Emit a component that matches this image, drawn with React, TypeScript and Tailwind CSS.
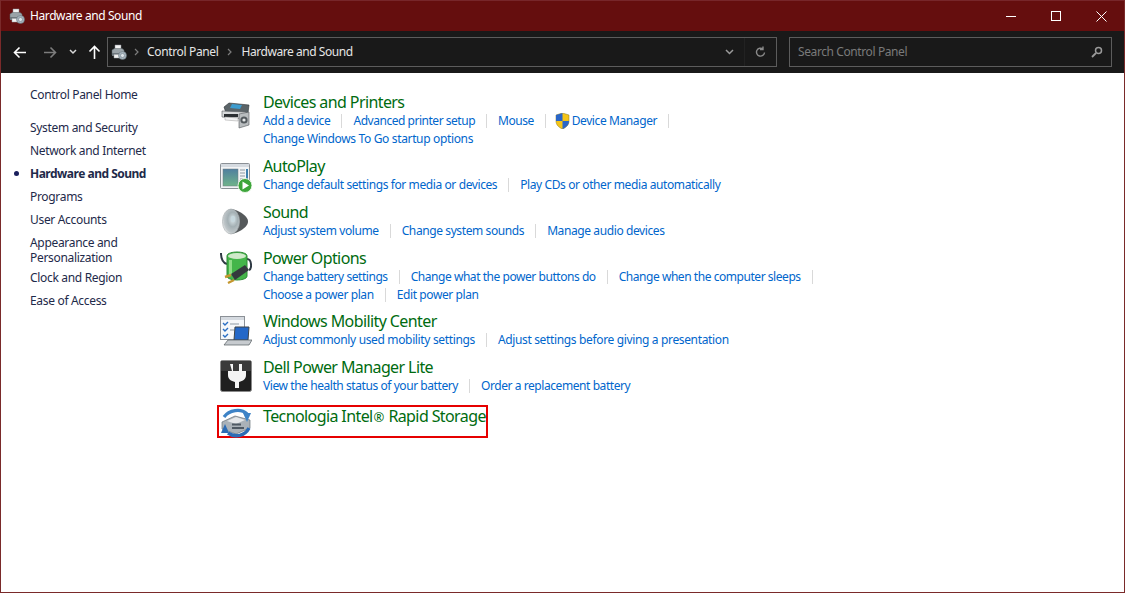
import React from "react";

const PrinterIcon = ({ size = 16 }: { size?: number }) => (
  <svg width={size} height={size} viewBox="0 0 32 32">
    <path d="M8 2h12v9H8z" fill="#f4f4f4" stroke="#8a8f94" />
    <path d="M2 12l5-3h15l4 3v10H2z" fill="#9aa3a8" stroke="#5b6469" />
    <path d="M2 18h24v6H2z" fill="#6d767c" />
    <path d="M6 21h11v7H6z" fill="#f2f2f2" stroke="#9aa0a5" />
    <circle cx="23" cy="23" r="8" fill="#a6b4bd" stroke="#5e6a72" />
    <circle cx="23" cy="23" r="4" fill="#dbe3e8" stroke="#6b7780" />
  </svg>
);

const DevicesIcon = () => (
  <svg width="32" height="32" viewBox="0 0 32 32">
    <path d="M4 9l5-4 20 2-1 8-22 0z" fill="#5b6468" stroke="#2d3235" strokeWidth=".6" />
    <path d="M12 6l10 1-2 4-10-1z" fill="#3d9ccf" />
    <path d="M2 13l24 1v7L2 19z" fill="#d8dadb" stroke="#55595c" strokeWidth=".6" />
    <path d="M4 16h14v3H4z" fill="#2b2f32" />
    <path d="M5 19l13 1v3l-13-1z" fill="#f3f3f3" stroke="#a0a0a0" strokeWidth=".5" />
    <path d="M19 16l10-2v13l-10 3z" fill="#b9bdbf" stroke="#55595c" strokeWidth=".6" />
    <circle cx="24" cy="22" r="3.6" fill="#545a5e" />
    <circle cx="24" cy="22" r="1.6" fill="#e6e8e9" />
  </svg>
);

const AutoPlayIcon = () => (
  <svg width="32" height="32" viewBox="0 0 32 32">
    <rect x=".5" y="2.5" width="29" height="25" rx="1" fill="#f2f4f6" stroke="#8b9096" />
    <rect x="1" y="3" width="28" height="3" fill="#d5dae0" />
    <defs>
      <linearGradient id="ap" x1="0" y1="0" x2="0" y2="1">
        <stop offset="0" stopColor="#4f7f9f" />
        <stop offset="1" stopColor="#6fb38a" />
      </linearGradient>
    </defs>
    <rect x="3" y="8" width="15" height="17" fill="url(#ap)" stroke="#6f7a80" strokeWidth=".5" />
    <path d="M20 9h5M20 12h5M20 15h5M20 18h3" stroke="#8d99a3" />
    <rect x="26" y="8" width="2" height="11" fill="#3d7fae" />
    <circle cx="25" cy="24.5" r="7" fill="#3da53a" stroke="#e8f5e6" />
    <path d="M22.5 20.5l6.5 4-6.5 4z" fill="#fff" />
  </svg>
);

const SoundIcon = () => (
  <svg width="32" height="32" viewBox="0 0 32 32">
    <defs>
      <radialGradient id="sn" cx=".6" cy=".42" r=".65">
        <stop offset="0" stopColor="#dbe6ea" />
        <stop offset=".45" stopColor="#a4b0b4" />
        <stop offset=".8" stopColor="#bfc6c9" />
        <stop offset="1" stopColor="#f4f5f5" />
      </radialGradient>
    </defs>
    <path d="M10 3c6 0 18 6 18 12.500S16 28 10 28z" fill="#55595b" />
    <ellipse cx="11" cy="15.500" rx="8.500" ry="12.500" fill="url(#sn)" stroke="#a7adb0" strokeWidth=".7" />
    <ellipse cx="13" cy="13" rx="2.200" ry="3.200" fill="#c7d8de" />
  </svg>
);

const PowerIcon = () => (
  <svg width="32" height="36" viewBox="0 0 32 36">
    <path d="M1 3c0 6 2 10 6 11M27 9c5 0 5 10 2 11" fill="none" stroke="#2f3a44" strokeWidth="2" />
    <path d="M7 6c0-3 6-4 10-4s10 1 10 4v20c0 3-6 4-10 4s-10-1-10-4z" fill="#44b54a" stroke="#2c8a33" />
    <ellipse cx="17" cy="6" rx="9" ry="3" fill="#cfe9c9" />
    <path d="M9 10h3v15H9z" fill="#8fdc87" />
    <path d="M11 24l14-9 4 5-14 10z" fill="#34393d" />
    <path d="M11 25l-6 2M14 30l-6 3" stroke="#c4972e" strokeWidth="2.4" />
  </svg>
);

const MobilityIcon = () => (
  <svg width="32" height="32" viewBox="0 0 32 32">
    <rect x=".5" y="1.5" width="24" height="23" fill="#f6f8fa" stroke="#8b9096" />
    <rect x="1" y="2" width="23" height="3" fill="#d5dae0" />
    <path d="M3 8l2 2 3-3M3 14l2 2 3-3M3 20l2 2 3-3" fill="none" stroke="#2a6fc4" strokeWidth="1.4" />
    <path d="M10 9h9M10 15h4" stroke="#8d99a3" />
    <path d="M15 12h14l-1 13H14z" fill="#2468c8" stroke="#3c4348" />
    <path d="M8 25h24l-3 5H4z" fill="#c7cbcf" stroke="#555b60" strokeWidth=".7" />
  </svg>
);

const DellIcon = () => (
  <svg width="32" height="32" viewBox="0 0 32 32">
    <rect x=".5" y=".5" width="31" height="31" rx="2" fill="#1f1f1f" stroke="#8a8a8a" />
    <path d="M1 1h30v10H1z" fill="#3a3a3a" />
    <path d="M10 4h3v7h6V4h3v7h4v4c0 4-3 6-7 7v6h-4v-6c-4-1-7-3-7-7v-4h4z" fill="#f4f4f4" />
  </svg>
);

const IntelIcon = () => (
  <svg width="32" height="30" viewBox="0 0 32 30">
    <path d="M2 14l13-6 15 4v8l-14 6-14-5z" fill="#aab2b8" stroke="#68727a" strokeWidth=".7" />
    <path d="M7 13l9-4 9 3-9 4z" fill="#e4e7e9" />
    <path d="M12 19h12v2H12zM12 15.500h9v2h-9z" fill="#4f5a64" />
    <path d="M4 9c5-7 17-9 23-3" fill="none" stroke="#3d83c6" strokeWidth="3.200" />
    <path d="M29 20c-4 8-14 10-21 5" fill="none" stroke="#2c6cb5" strokeWidth="3.400" />
    <path d="M5 16l4 9-8 0z" fill="#2c6cb5" />
    <path d="M27 14l-4-9 8 0z" fill="#3d83c6" />
  </svg>
);

const ShieldIcon = () => (
  <svg width="15" height="16" viewBox="0 0 15 16">
    <path d="M7.5 0L14 2v6c0 4-3 6.500-6.500 8C4 14.500 1 12 1 8V2z" fill="#f5c518" stroke="#8a7a20" strokeWidth=".5" />
    <path d="M7.500 0v8H1V2zM7.500 8H14c0 4-3 6.500-6.500 8z" fill="#2a66c8" />
  </svg>
);

const Sep = () => <span className="mx-[11px] h-[14px] w-px bg-[#d9d9d9]" />;

const Link = ({ children }: { children: React.ReactNode }) => (
  <span className="whitespace-nowrap text-[#0066cc]">{children}</span>
);

const Line = ({ items, end, track = "tracking-[-0.4px]" }: { items: string[]; end?: boolean; track?: string }) => (
  <div className={`flex h-[18px] items-center pt-[2px] text-[12px] ${track}`}>
    {items.map((t, i) => (
      <React.Fragment key={t}>
        <Link>{t}</Link>
        {(i < items.length - 1 || end) && <Sep />}
      </React.Fragment>
    ))}
  </div>
);

const Heading = ({ children }: { children: React.ReactNode }) => (
  <div className="h-[18px] whitespace-nowrap text-[16px] leading-[18px] tracking-[-0.6px] text-[#006b10]">{children}</div>
);

const navItems = ["System and Security", "Network and Internet", "Hardware and Sound", "Programs", "User Accounts"];

export default function App() {
  return (
    <div className="flex h-[593px] w-[1125px] flex-col overflow-hidden border border-t-0 border-[#7a2a2a] bg-white font-['Noto_Sans',sans-serif]">
      {/* title bar */}
      <div className="flex h-[31px] shrink-0 items-center border-t border-[#77262a] bg-[#650e0e] text-white">
        <div className="ml-[8px] mr-[5px]"><PrinterIcon size={16} /></div>
        <span className="text-[12px] tracking-[-0.4px]">Hardware and Sound</span>
        <div className="ml-auto flex items-center">
          <div className="flex h-[30px] w-[45px] items-center justify-center">
            <span className="h-px w-[10px] bg-white" />
          </div>
          <div className="flex h-[30px] w-[45px] items-center justify-center">
            <span className="h-[10px] w-[10px] border border-white" />
          </div>
          <div className="flex h-[30px] w-[46px] items-center justify-center">
            <svg width="11" height="11" viewBox="0 0 11 11"><path d="M.5.5l10 10M10.500.5l-10 10" stroke="#fff" /></svg>
          </div>
        </div>
      </div>

      {/* toolbar */}
      <div className="flex h-[42px] shrink-0 items-center bg-[#191919]">
        <button className="ml-[12px] w-[14px]">
          <svg width="14" height="13" viewBox="0 0 14 13"><path d="M13 6.500H1.500M6.500 1.500l-5 5 5 5" fill="none" stroke="#fff" strokeWidth="1.6" /></svg>
        </button>
        <button className="ml-[16px] w-[14px]">
          <svg width="14" height="13" viewBox="0 0 14 13"><path d="M1 6.500h11.500M7.500 1.500l5 5-5 5" fill="none" stroke="#7c7c7c" strokeWidth="1.6" /></svg>
        </button>
        <button className="ml-[12px] w-[8px]">
          <svg width="8" height="6" viewBox="0 0 8 6"><path d="M1 1l3 3 3-3" fill="none" stroke="#d8d8d8" strokeWidth="1.5" /></svg>
        </button>
        <button className="ml-[11px] w-[13px]">
          <svg width="13" height="14" viewBox="0 0 13 14"><path d="M6.500 14V1.500M1.500 6.500l5-5 5 5" fill="none" stroke="#fff" strokeWidth="1.6" /></svg>
        </button>
        <div className="ml-[6px] flex h-[30px] w-[670px] items-center border border-[#5c5c5c] text-[#e6e6e6]">
          <div className="ml-[3px]"><PrinterIcon size={16} /></div>
          <svg className="ml-[7px]" width="5" height="8" viewBox="0 0 5 8"><path d="M1 1l3 3-3 3" fill="none" stroke="#7c7c7c" strokeWidth="1.2" /></svg>
          <span className="ml-[8px] text-[12px] tracking-[-0.35px]">Control Panel</span>
          <svg className="ml-[8px]" width="5" height="8" viewBox="0 0 5 8"><path d="M1 1l3 3-3 3" fill="none" stroke="#7c7c7c" strokeWidth="1.2" /></svg>
          <span className="ml-[10px] text-[12px] tracking-[-0.45px]">Hardware and Sound</span>
          <svg className="ml-auto" width="9" height="6" viewBox="0 0 9 6"><path d="M1 1l3.500 3.500L8 1" fill="none" stroke="#9a9a9a" strokeWidth="1.5" /></svg>
          <span className="ml-[10px] h-full w-px bg-[#222]" />
          <svg className="mx-[10px]" width="11" height="12" viewBox="0 0 11 12"><path d="M9.500 6.500a4 4 0 1 1-1.500-3.500M8 .5v3H5" fill="none" stroke="#8a8a8a" strokeWidth="1.4" /></svg>
        </div>
        <div className="ml-[12px] flex h-[30px] w-[323px] items-center justify-between border border-[#5c5c5c] pl-[8px] pr-[8px] text-[12px] tracking-[-0.4px] text-[#7a7a7a]">
          <span>Search Control Panel</span>
          <svg width="12" height="12" viewBox="0 0 12 12"><circle cx="7.500" cy="4.500" r="3" fill="none" stroke="#9a9a9a" strokeWidth="1.500" /><path d="M5 7l-4 4" stroke="#9a9a9a" strokeWidth="1.800" /></svg>
        </div>
      </div>

      {/* body */}
      <div className="flex min-h-0 flex-1">
        <nav className="w-[216px] shrink-0 pl-[29px] pt-[14px] text-[12px] tracking-[-0.32px] text-[#1e2a4a]">
          <div className="flex h-[15px] items-center">Control Panel Home</div>
          <ul className="mt-[14px] flex flex-col">
            {navItems.map((n) => (
              <li key={n} className={n === "Hardware and Sound" ? "relative flex h-[23px] items-center font-bold tracking-[-0.5px]" : "flex h-[23px] items-center"}>
                {n === "Hardware and Sound" && <span className="absolute left-[-16px] h-[5px] w-[5px] rounded-full bg-[#1a1f5c]" />}
                {n}
              </li>
            ))}
            <li className="pt-[4px] leading-[15px]">Appearance and<br />Personalization</li>
            <li className="mt-[1px] flex h-[23px] items-center">Clock and Region</li>
            <li className="flex h-[23px] items-center">Ease of Access</li>
          </ul>
        </nav>

        <main className="flex-1 pt-[20px]">
          <section className="flex">
            <div className="ml-[3px] mr-[11px] mt-[5px] w-[32px]"><DevicesIcon /></div>
            <div>
              <Heading>Devices and Printers</Heading>
              <div className="flex h-[18px] items-center pt-[2px] text-[12px] tracking-[-0.4px]">
                <span className="tracking-[-0.3px]"><Link>Add a device</Link></span><Sep />
                <span className="tracking-[-0.47px]"><Link>Advanced printer setup</Link></span><Sep />
                <span className="tracking-[-0.5px]"><Link>Mouse</Link></span><Sep />
                <span className="-ml-[2px]"><ShieldIcon /></span><span className="ml-[2px]"><Link>Device Manager</Link></span><Sep />
              </div>
              <Line items={["Change Windows To Go startup options"]} track="tracking-[-0.35px]" />
            </div>
          </section>

          <section className="mt-[10px] flex">
            <div className="ml-[3px] mr-[11px] mt-[4px] w-[32px]"><AutoPlayIcon /></div>
            <div>
              <Heading>AutoPlay</Heading>
              <Line items={["Change default settings for media or devices", "Play CDs or other media automatically"]} />
            </div>
          </section>

          <section className="mt-[10px] flex">
            <div className="ml-[3px] mr-[11px] mt-[3px] w-[32px]"><SoundIcon /></div>
            <div>
              <Heading>Sound</Heading>
              <Line items={["Adjust system volume", "Change system sounds", "Manage audio devices"]} />
            </div>
          </section>

          <section className="mt-[10px] flex">
            <div className="ml-[3px] mr-[11px] mt-[1px] w-[32px]"><PowerIcon /></div>
            <div>
              <Heading>Power Options</Heading>
              <Line items={["Change battery settings", "Change what the power buttons do", "Change when the computer sleeps"]} end track="tracking-[-0.45px]" />
              <Line items={["Choose a power plan", "Edit power plan"]} />
            </div>
          </section>

          <section className="mt-[9px] flex">
            <div className="ml-[3px] mr-[11px] mt-[3px] w-[32px]"><MobilityIcon /></div>
            <div>
              <Heading>Windows Mobility Center</Heading>
              <Line items={["Adjust commonly used mobility settings", "Adjust settings before giving a presentation"]} track="tracking-[-0.35px]" />
            </div>
          </section>

          <section className="mt-[10px] flex">
            <div className="ml-[3px] mr-[11px] mt-[2px] w-[32px]"><DellIcon /></div>
            <div>
              <Heading>Dell Power Manager Lite</Heading>
              <Line items={["View the health status of your battery", "Order a replacement battery"]} track="tracking-[-0.43px]" />
            </div>
          </section>

          <section className="mt-[11px] flex h-[33px] w-[271px] border-2 border-[#e60000]">
            <div className="ml-[1px] mr-[11px] mt-[1px] w-[32px]"><IntelIcon /></div>
            <Heading>Tecnologia Intel<span className="mx-[1px] text-[13px]">®</span> Rapid Storage</Heading>
          </section>
        </main>
      </div>
    </div>
  );
}
